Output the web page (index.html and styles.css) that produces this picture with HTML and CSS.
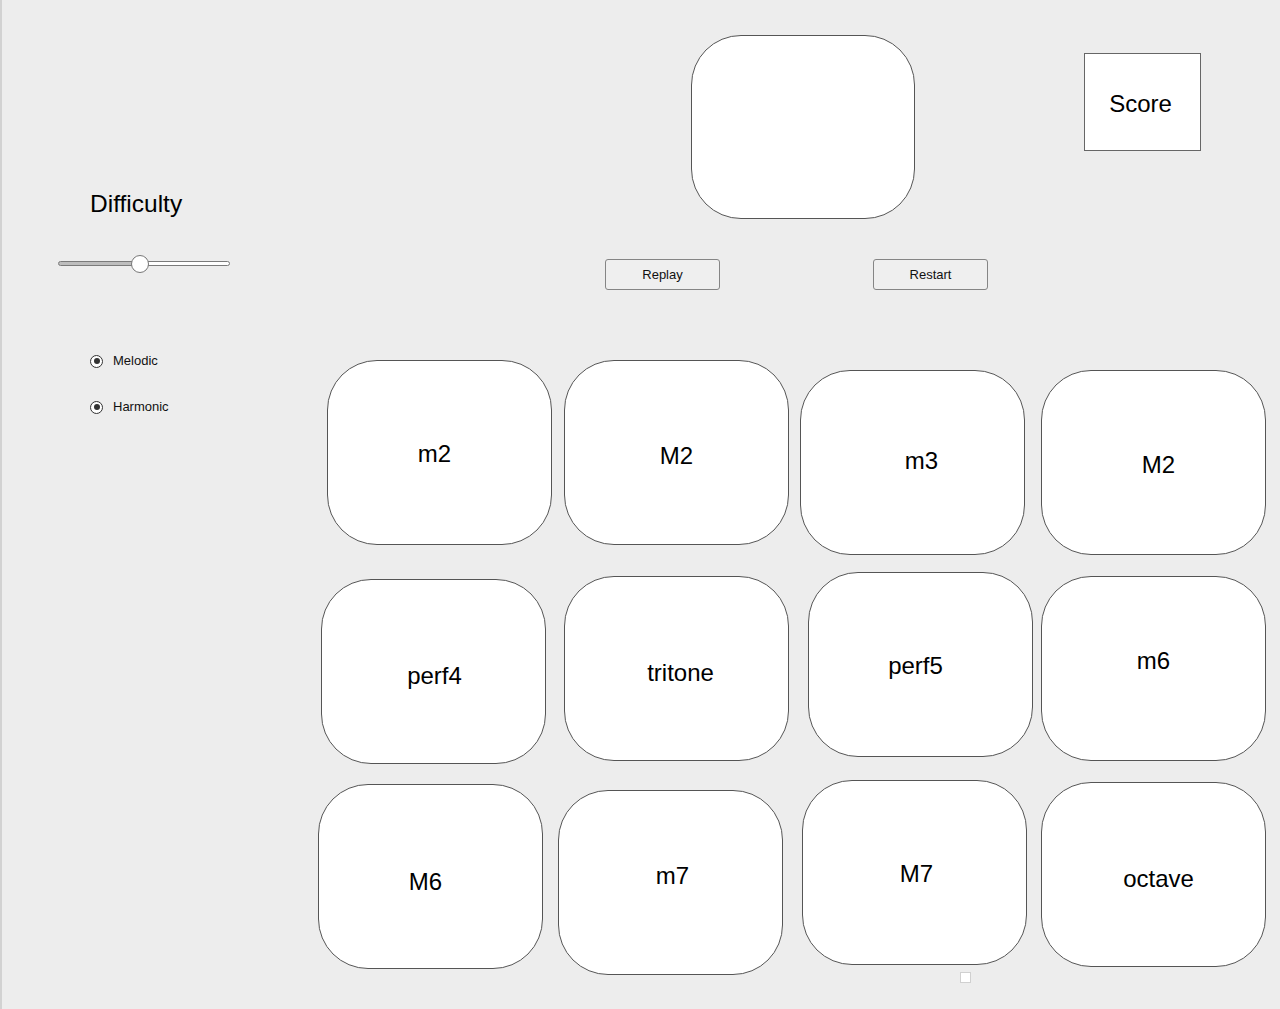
FILE: index.html
```html
<!DOCTYPE html>
<html>
<head>
<meta charset="utf-8">
<title>Interval Trainer</title>
<link rel="stylesheet" href="styles.css">
</head>
<body>
<div class="page">
  <aside class="side">
    <h1 class="difficulty">Difficulty</h1>
    <input class="slider" type="range" min="0" max="100" step="0.1" value="47.4">
    <div class="modes">
      <label class="radio"><span class="dot"></span>Melodic</label>
      <label class="radio"><span class="dot"></span>Harmonic</label>
    </div>
  </aside>
  <main class="main">
    <div class="row-a">
      <div class="display"></div>
      <div class="score">Score</div>
    </div>
    <div class="row-b">
      <button class="btn replay">Replay</button>
      <button class="btn restart">Restart</button>
    </div>
    <div class="tiles">
      <button class="tile t1">m2</button>
      <button class="tile t2">M2</button>
      <button class="tile t3">m3</button>
      <button class="tile t4">M2</button>
      <button class="tile t5">perf4</button>
      <button class="tile t6">tritone</button>
      <button class="tile t7">perf5</button>
      <button class="tile t8">m6</button>
      <button class="tile t9">M6</button>
      <button class="tile t10">m7</button>
      <button class="tile t11">M7</button>
      <button class="tile t12">octave</button>
    </div>
    <span class="check"></span>
  </main>
</div>
</body>
</html>
```
FILE: styles.css
```css
html, body {
  margin: 0;
  padding: 0;
}
body {
  background: #ededed;
  height: 1009px;
  overflow: hidden;
  box-shadow: inset 2px 0 0 #d2d2d2;
  font-family: "Liberation Sans", Arial, sans-serif;
  color: #000;
}
.page {
  display: flex;
  align-items: flex-start;
}
.side {
  width: 300px;
  flex: none;
  padding: 190px 0 0 58px;
  box-sizing: border-box;
  display: flex;
  flex-direction: column;
  align-items: flex-start;
}
.difficulty {
  margin: 0 0 0 32px;
  font-size: 24.5px;
  font-weight: normal;
  line-height: 28px;
}
.slider {
  -webkit-appearance: none;
  appearance: none;
  margin: 36px 0 0 0;
  padding: 0;
  width: 172px;
  height: 18px;
  background: transparent;
}
.slider::-webkit-slider-runnable-track {
  height: 5px;
  border: 1px solid #7a7a7a;
  border-radius: 4px;
  background: linear-gradient(to right, #bdbdbd 0 47.7%, #ffffff 47.7% 100%);
}
.slider::-webkit-slider-thumb {
  -webkit-appearance: none;
  width: 18px;
  height: 18px;
  margin-top: -7px;
  border: 1px solid #777;
  border-radius: 50%;
  background: #fff;
  box-sizing: border-box;
}
.modes {
  margin: 81px 0 0 32px;
  display: flex;
  flex-direction: column;
  gap: 30px;
}
.radio {
  display: flex;
  align-items: center;
  gap: 10px;
  font-size: 13px;
  line-height: 16px;
  height: 16px;
  color: #111;
}
.dot {
  width: 13px;
  height: 13px;
  box-sizing: border-box;
  border: 1.5px solid #333;
  border-radius: 50%;
  display: flex;
  align-items: center;
  justify-content: center;
  background: #fff;
}
.dot::after {
  content: "";
  width: 6px;
  height: 6px;
  border-radius: 50%;
  background: #333;
}
.main {
  flex: 1;
  display: flex;
  flex-direction: column;
  align-items: flex-start;
}
.row-a {
  display: flex;
  align-items: flex-start;
}
.display {
  margin: 35px 0 0 391px;
  width: 224px;
  height: 184px;
  box-sizing: border-box;
  border: 1px solid #555;
  border-radius: 50px;
  background: #fff;
}
.score {
  margin: 53px 0 0 169px;
  width: 117px;
  height: 98px;
  box-sizing: border-box;
  padding: 4px 4px 0 0;
  border: 1px solid #666;
  background: #fff;
  display: flex;
  align-items: center;
  justify-content: center;
  font-size: 24px;
}
.row-b {
  display: flex;
  margin-top: 40px;
}
.btn {
  width: 115px;
  height: 31px;
  box-sizing: border-box;
  border: 1px solid #858585;
  border-radius: 3px;
  background: #efefef;
  font-family: "Liberation Sans", Arial, sans-serif;
  font-size: 13px;
  color: #111;
  padding: 0;
}
.replay {
  margin-left: 305px;
}
.restart {
  margin-left: 153px;
}
.tiles {
  margin: 70px 0 0 18px;
  display: grid;
  grid-template-columns: 240px 242px 241px 225px;
  grid-template-rows: 212px 208px auto;
  align-items: start;
  justify-items: start;
}
.tile {
  width: 225px;
  height: 185px;
  box-sizing: border-box;
  border: 1px solid #555;
  border-radius: 50px;
  background: #fff;
  font-family: "Liberation Sans", Arial, sans-serif;
  font-size: 24px;
  color: #000;
  padding: 0;
  display: flex;
  align-items: center;
  justify-content: center;
}
.t1 { margin: 0 0 0 9px; padding: 2px 10px 0 0; }
.t2 { margin: 0 0 0 6px; padding: 6px 0 0 0; }
.t3 { margin: 10px 0 0 0; padding: 0 0 4px 18px; }
.t4 { margin: 10px 0 0 0; padding: 4px 0 0 10px; }
.t5 { margin: 7px 0 0 3px; padding: 8px 0 0 2px; }
.t6 { margin: 4px 0 0 6px; padding: 8px 0 0 8px; }
.t7 { margin: 0 0 0 8px; padding: 2px 10px 0 0; }
.t8 { margin: 4px 0 0 0; padding: 0 0 16px 0; }
.t9 { margin: 4px 0 0 0; padding: 10px 10px 0 0; }
.t10 { margin: 10px 0 0 0; padding: 0 0 14px 4px; }
.t11 { margin: 0 0 0 2px; padding: 2px 0 0 4px; }
.t12 { margin: 2px 0 0 0; padding: 8px 0 0 10px; }
.check {
  display: block;
  margin: -3px 0 0 660px;
  width: 11px;
  height: 11px;
  box-sizing: border-box;
  border: 1px solid #d0d0d0;
  background: #fff;
}
```
